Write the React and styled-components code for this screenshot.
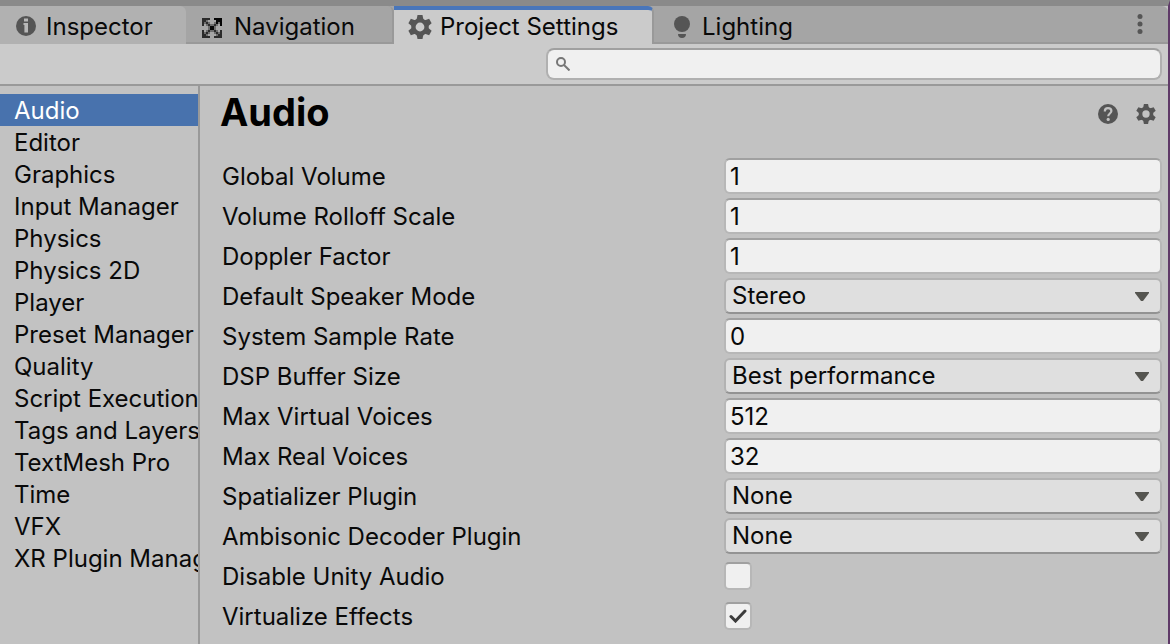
import React, { useState } from "react";
import styled, { createGlobalStyle } from "styled-components";

const GlobalStyle = createGlobalStyle`
  *, *::before, *::after { box-sizing: border-box; }
  body { margin: 0; background: #c2c2c2; }
  button, input, select { font: inherit; color: inherit; }
`;

const Window = styled.div`
  display: flex;
  flex-direction: column;
  min-height: 100vh;
  border-top: 6px solid #8a8a8a;
  border-right: 2px solid #5f3a68;
  background: #c2c2c2;
  color: #090909;
  font: 24px/32px Inter, "Liberation Sans", sans-serif;
  overflow: hidden;
`;

const TabBar = styled.div`
  display: flex;
  height: 38px;
  background: #a5a5a5;
  border-radius: 0 6px 0 0;
  box-shadow: inset 0 -2px #999;
`;

const Tab = styled.button`
  display: flex;
  align-items: center;
  gap: ${(p) => p.$gap || 8}px;
  width: ${(p) => p.$width}px;
  padding: 4px 0 0 ${(p) => p.$inset || 14}px;
  border: 0;
  border-top: 0 solid #4976ba;
  border-right: ${(p) => (p.$divided ? "2px solid #999" : "0")};
  border-radius: 0 6px 0 0;
  background: ${(p) => (p.$hovered ? "#b1b1b1" : "transparent")};
  white-space: nowrap;
  ${(p) =>
    p.$active &&
    `
    padding-top: 0;
    border-top-width: 4px;
    background: #cbcbcb;
  `}
`;

const Spacer = styled.div`
  flex: 1;
`;

const IconButton = styled.button`
  display: flex;
  align-items: center;
  padding: 0;
  border: 0;
  background: none;
`;

const MenuButton = styled(IconButton)`
  padding: 0 25px 2px 0;
`;

const Toolbar = styled.div`
  display: flex;
  justify-content: flex-end;
  height: 42px;
  padding: 4px 6px 0 0;
  background: #cbcbcb;
  border-bottom: 2px solid #999;
`;

const SearchBox = styled.label`
  display: flex;
  align-items: center;
  gap: 8px;
  flex: 0 1 616px;
  height: 32px;
  padding: 0 8px;
  border: 2px solid #b0b0b0;
  border-top-color: #a0a0a0;
  border-radius: 8px;
  background: #f0f0f0;
`;

const SearchInput = styled.input`
  flex: 1;
  min-width: 0;
  height: 24px;
  padding: 0;
  border: 0;
  outline: 0;
  background: none;
`;

const Body = styled.div`
  display: flex;
  flex: 1;
`;

const Sidebar = styled.nav`
  display: flex;
  flex-direction: column;
  flex: 0 0 200px;
  min-width: 0;
  padding-top: 8px;
  border-right: 2px solid #999;
`;

const SidebarItem = styled.a`
  height: 32px;
  padding-left: 14px;
  overflow: hidden;
  line-height: 34px;
  color: ${(p) => (p.$selected ? "#fff" : "inherit")};
  background: ${(p) => (p.$selected ? "#4872ad" : "transparent")};
  text-decoration: none;
  white-space: nowrap;
`;

const Panel = styled.main`
  flex: 1;
  min-width: 0;
  padding: 8px 6px 10px 20px;
`;

const PanelHeader = styled.header`
  display: flex;
  align-items: center;
  gap: 18px;
  height: 40px;
  margin-bottom: 22px;
  padding-right: 6px;
`;

const Title = styled.h1`
  flex: 1;
  margin: 0;
  padding-bottom: 4px;
  color: #000;
  font-size: 38px;
  line-height: 40px;
  font-weight: 700;
`;

const Rows = styled.div`
  display: flex;
  flex-direction: column;
  padding-left: 2px;
`;

const Row = styled.div`
  display: grid;
  grid-template-columns: minmax(0, 502fr) minmax(0, 438fr);
  align-items: center;
  height: 40px;
`;

const Label = styled.label`
  padding-top: 2px;
  white-space: nowrap;
`;

const TextField = styled.input`
  width: 100%;
  height: 36px;
  padding: 0 4px;
  border: 2px solid #b7b7b7;
  border-top-color: #a0a0a0;
  border-radius: 6px;
  outline: 0;
  background: #f0f0f0;
`;

const SelectWrap = styled.div`
  display: grid;
  align-items: center;
  > * { grid-area: 1 / 1; }
  > svg { justify-self: end; margin-right: 13px; pointer-events: none; }
`;

const Select = styled.select`
  width: 100%;
  height: 36px;
  padding: 0 36px 2px 6px;
  border: 2px solid #b2b2b2;
  border-bottom-color: #939393;
  border-radius: 6px;
  outline: 0;
  appearance: none;
  background: #dfdfdf;
`;

const CheckWrap = styled.div`
  display: grid;
  justify-content: start;
  align-items: center;
  justify-items: center;
  > * { grid-area: 1 / 1; }
  > svg { pointer-events: none; }
`;

const Checkbox = styled.input`
  width: 28px;
  height: 28px;
  margin: 0;
  border: 2px solid #b7b7b7;
  border-top-color: #a0a0a0;
  border-radius: 5px;
  appearance: none;
  background: #f0f0f0;
  & + svg { visibility: hidden; }
  &:checked + svg { visibility: visible; }
`;

const InfoIcon = () => (
  <svg width="24" height="24" viewBox="0 0 24 24" aria-hidden="true">
    <circle cx="12" cy="11" r="10" fill="#555" />
    <path d="M10 3.500h4v3h-4zM9.500 8H14v9.500h-3.600V10H9.500z" fill="#b8b8b8" />
  </svg>
);

const NAV_CELLS = [
  "DDDD..KKKK",
  "DDG....KKK",
  "DGDG..GKGK",
  "D.GDGGDG.K",
  "...GKKG...",
  "...GKKG...",
  "D.GDGGDG.D",
  "DGDG..GDGD",
  "DDG....GDD",
  "DDDD..DDDD",
];
const NAV_COLORS = { D: "#2b2b2b", K: "#050505", G: "#6c6c6c" };

const NavigationIcon = () => (
  <svg width="20" height="22" viewBox="0 -2 20 22" shapeRendering="crispEdges" aria-hidden="true">
    {NAV_CELLS.flatMap((row, y) =>
      [...row].map((c, x) =>
        c === "." ? null : (
          <rect key={`${x}-${y}`} x={x * 2} y={y * 2} width="2" height="2" fill={NAV_COLORS[c]} />
        )
      )
    )}
  </svg>
);

const GEAR_TEETH = [0, 60, 120, 180, 240, 300];

const GearIcon = ({ size }) => (
  <svg width={size} height={size} viewBox="0 0 24 24" aria-hidden="true">
    <g fill="#555">
      {GEAR_TEETH.map((angle) => (
        <path key={angle} d="M9.500 0h5l1 5h-7z" transform={`rotate(${angle} 12 12)`} />
      ))}
    </g>
    <circle cx="12" cy="12" r="6.600" fill="none" stroke="#555" strokeWidth="4.400" />
  </svg>
);

const BulbIcon = () => (
  <svg width="16" height="24" viewBox="0 0 16 24" aria-hidden="true">
    <circle cx="8" cy="9" r="8" fill="#555" />
    <path d="M4 19h8c0 2.500-1.500 4-4 4s-4-1.500-4-4z" fill="#555" />
  </svg>
);

const DotsIcon = () => (
  <svg width="6" height="20" viewBox="0 0 6 20" fill="#555" aria-hidden="true">
    <circle cx="3" cy="2.500" r="2.500" />
    <circle cx="3" cy="10" r="2.500" />
    <circle cx="3" cy="17.500" r="2.500" />
  </svg>
);

const SearchIcon = () => (
  <svg width="14" height="14" viewBox="0 0 14 14" fill="none" stroke="#767676" strokeWidth="2" aria-hidden="true">
    <circle cx="5" cy="5" r="4" />
    <path d="M8 8l5.500 5.500" />
  </svg>
);

const HelpIcon = () => (
  <svg width="20" height="20" viewBox="0 0 20 20" aria-hidden="true">
    <circle cx="10" cy="10" r="10" fill="#555" />
    <path d="M6.800 7.500C6.800 5.300 8 4.200 10 4.200s3.400 1.100 3.400 2.900c0 2.300-3.200 2.500-3.200 5.100" fill="none" stroke="#c2c2c2" strokeWidth="2.200" />
    <circle cx="10.200" cy="15.400" r="1.600" fill="#c2c2c2" />
  </svg>
);

const ArrowIcon = () => (
  <svg width="14" height="9" viewBox="0 0 14 9" aria-hidden="true">
    <path d="M0 0h14v1L8 9H6L0 1z" fill="#555550" />
  </svg>
);

const CheckIcon = () => (
  <svg width="18" height="14" viewBox="0 0 18 14" fill="none" aria-hidden="true">
    <path d="M2 7.500l4.500 4.500L16 2" stroke="#3c3c3c" strokeWidth="3" strokeLinecap="round" />
  </svg>
);

const SECTIONS = [
  "Audio", "Editor", "Graphics", "Input Manager", "Physics", "Physics 2D", "Player",
  "Preset Manager", "Quality", "Script Execution", "Tags and Layers",
  "TextMesh Pro", "Time", "VFX", "XR Plugin Management",
];

const SETTINGS = [
  { label: "Global Volume", kind: "text", value: "1" },
  { label: "Volume Rolloff Scale", kind: "text", value: "1" },
  { label: "Doppler Factor", kind: "text", value: "1" },
  { label: "Default Speaker Mode", kind: "select", value: "Stereo" },
  { label: "System Sample Rate", kind: "text", value: "0" },
  { label: "DSP Buffer Size", kind: "select", value: "Best performance" },
  { label: "Max Virtual Voices", kind: "text", value: "512" },
  { label: "Max Real Voices", kind: "text", value: "32" },
  { label: "Spatializer Plugin", kind: "select", value: "None" },
  { label: "Ambisonic Decoder Plugin", kind: "select", value: "None" },
  { label: "Disable Unity Audio", kind: "check", value: false },
  { label: "Virtualize Effects", kind: "check", value: true },
];

function Control({ id, kind, value }) {
  if (kind === "text") return <TextField id={id} type="text" defaultValue={value} />;
  if (kind === "select")
    return (
      <SelectWrap>
        <Select id={id} defaultValue={value}>
          <option>{value}</option>
        </Select>
        <ArrowIcon />
      </SelectWrap>
    );
  return (
    <CheckWrap>
      <Checkbox id={id} type="checkbox" defaultChecked={value} />
      <CheckIcon />
    </CheckWrap>
  );
}

export default function App() {
  const [section, setSection] = useState("Audio");
  return (
    <>
      <GlobalStyle />
      <Window>
        <TabBar>
          <Tab type="button" $width={186} $hovered><InfoIcon />Inspector</Tab>
          <Tab type="button" $width={208} $inset={16} $gap={12} $divided><NavigationIcon />Navigation</Tab>
          <Tab type="button" $width={260} $active $divided><GearIcon size={24} />Project Settings</Tab>
          <Tab type="button" $width={160} $inset={20} $gap={12}><BulbIcon />Lighting</Tab>
          <Spacer />
          <MenuButton type="button" aria-label="Window menu"><DotsIcon /></MenuButton>
        </TabBar>
        <Toolbar>
          <SearchBox>
            <SearchIcon />
            <SearchInput type="text" aria-label="Search settings" />
          </SearchBox>
        </Toolbar>
        <Body>
          <Sidebar>
            {SECTIONS.map((name) => (
              <SidebarItem key={name} href="#" $selected={name === section} onClick={() => setSection(name)}>
                {name}
              </SidebarItem>
            ))}
          </Sidebar>
          <Panel>
            <PanelHeader>
              <Title>Audio</Title>
              <IconButton type="button" aria-label="Help"><HelpIcon /></IconButton>
              <IconButton type="button" aria-label="Options"><GearIcon size={20} /></IconButton>
            </PanelHeader>
            <Rows>
              {SETTINGS.map((s, i) => (
                <Row key={s.label}>
                  <Label htmlFor={`setting-${i}`}>{s.label}</Label>
                  <Control id={`setting-${i}`} kind={s.kind} value={s.value} />
                </Row>
              ))}
            </Rows>
          </Panel>
        </Body>
      </Window>
    </>
  );
}
